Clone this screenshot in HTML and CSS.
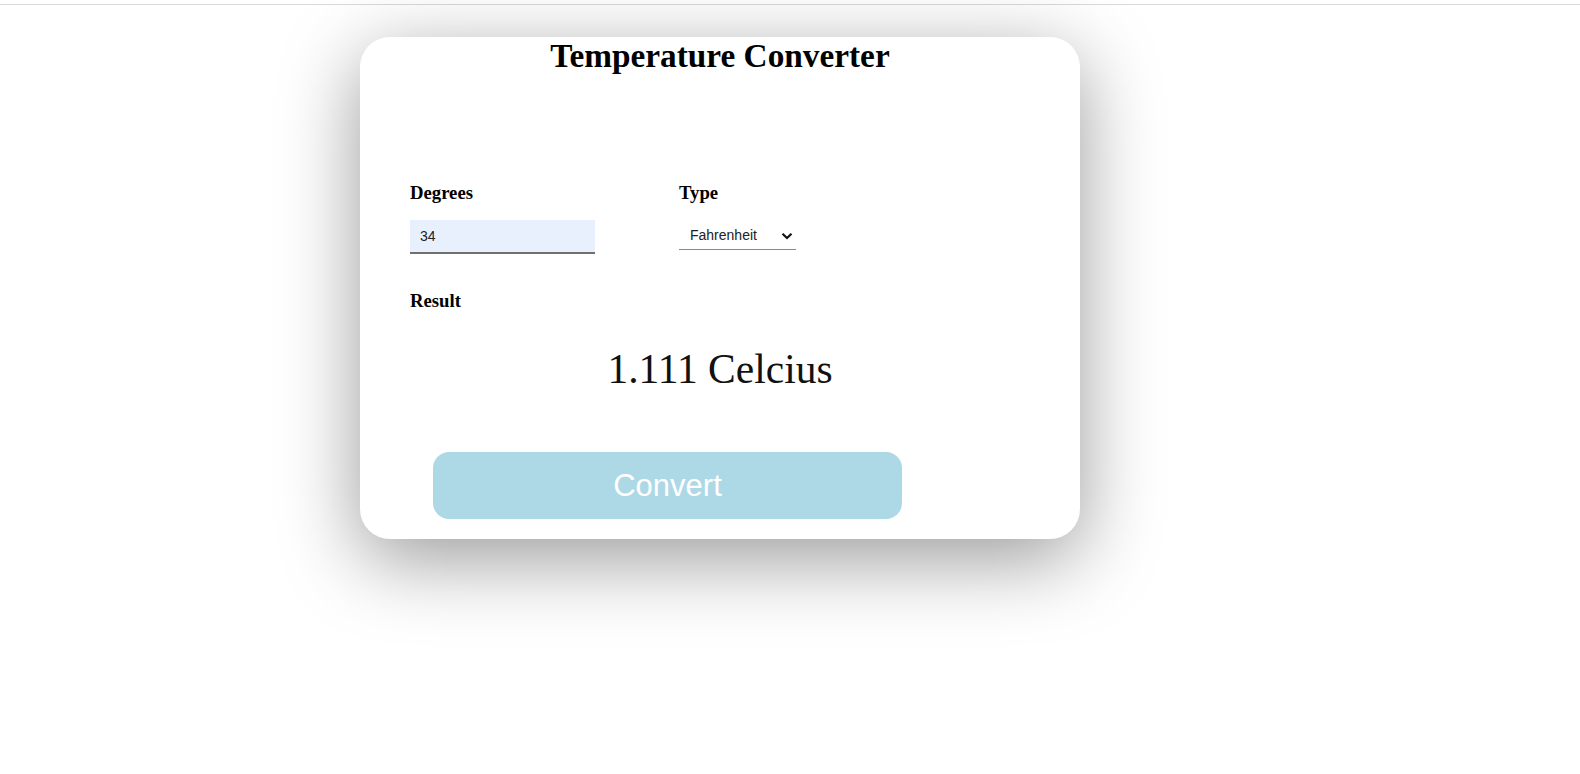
FILE: index.html
```html
<!DOCTYPE html>
<html>
<head>
<meta charset="utf-8">
<title>Temperature Converter</title>
<link rel="stylesheet" href="styles.css">
</head>
<body>
<div class="topline"></div>
<div class="card">
  <h1 class="title">Temperature Converter</h1>
  <div class="row">
    <div class="field field-degrees">
      <label class="label" for="deg">Degrees</label>
      <input id="deg" class="input" type="text" value="34">
    </div>
    <div class="field field-type">
      <label class="label" for="type">Type</label>
      <div class="select-wrap">
        <select id="type" class="select">
          <option>Fahrenheit</option>
          <option>Celcius</option>
        </select>
        <svg class="chevron" width="12" height="8" viewBox="0 0 12 8"><path d="M1.5 1.8 L6 6 L10.5 1.8" fill="none" stroke="#111" stroke-width="2.2"/></svg>
      </div>
    </div>
  </div>
  <div class="label result-label">Result</div>
  <div class="result">1.111 Celcius</div>
  <button class="btn">Convert</button>
</div>
</body>
</html>
```
FILE: styles.css
```css
html, body {
  margin: 0;
  padding: 0;
  background: #ffffff;
}
body {
  min-height: 100vh;
  font-family: "Liberation Serif", "Times New Roman", serif;
  color: #000;
}
.topline {
  margin-top: 4px;
  height: 1px;
  background: #d9d9d9;
}
.card {
  box-sizing: border-box;
  width: 720px;
  min-height: 502px;
  margin: 32px 0 0 360px;
  padding: 0 50px 20px 50px;
  background: #fff;
  border-radius: 30px;
  box-shadow: 0 20px 80px rgba(0, 0, 0, 0.4);
  display: flex;
  flex-direction: column;
}
.title {
  margin: 0;
  font-size: 33.3px;
  line-height: 38px;
  font-weight: bold;
  text-align: center;
}
.row {
  display: flex;
  align-items: flex-start;
  margin-top: 107px;
}
.field {
  display: flex;
  flex-direction: column;
}
.field-type {
  margin-left: 84px;
}
.label {
  display: block;
  font-size: 18.72px;
  line-height: 22px;
  font-weight: bold;
  margin-bottom: 16px;
}
.input {
  box-sizing: border-box;
  width: 185px;
  height: 34px;
  border: none;
  border-bottom: 2px solid #707070;
  background: #e8f0fe;
  padding: 0 0 0 10px;
  font-family: "Liberation Sans", Arial, sans-serif;
  font-size: 14px;
  color: #222;
  outline: none;
}
.select-wrap {
  position: relative;
  width: 117px;
  height: 28px;
  margin-top: 1px;
}
.select {
  appearance: none;
  -webkit-appearance: none;
  box-sizing: border-box;
  width: 117px;
  height: 29px;
  border: none;
  border-bottom: 1px solid #8a8a8a;
  background: transparent;
  padding: 0 0 0 11px;
  font-family: "Liberation Sans", Arial, sans-serif;
  font-size: 14px;
  color: #222;
  outline: none;
}
.chevron {
  position: absolute;
  right: 3px;
  top: 11px;
  pointer-events: none;
}
.result-label {
  margin-top: 36px;
  margin-bottom: 0;
}
.result {
  margin-top: 34px;
  font-size: 41.5px;
  line-height: 47px;
  text-align: center;
  color: #111;
}
.btn {
  align-self: flex-start;
  margin-top: 59px;
  margin-left: 23px;
  width: 469px;
  height: 67px;
  border: none;
  border-radius: 16px;
  background: #add8e6;
  color: #ffffff;
  font-family: "Liberation Sans", Arial, sans-serif;
  font-size: 31px;
  padding: 0;
  cursor: pointer;
}
```
